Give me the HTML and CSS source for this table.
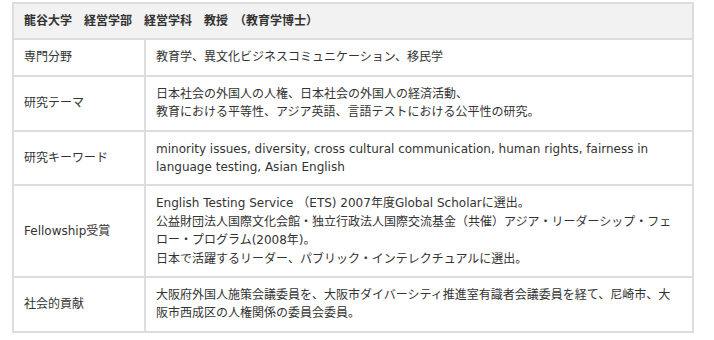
FILE: index.html
```html
<!DOCTYPE html>
<html lang="ja">
<head>
  <meta charset="UTF-8" />
  <title>教員プロフィール</title>
  <link rel="stylesheet" href="styles.css">
</head>
<body>
  <table class="profile">
    <tr>
      <th colspan="2" class="profile-head">龍谷大学　経営学部　経営学科　教授　（教育学博士）</th>
    </tr>
    <tr>
      <td class="label">専門分野</td>
      <td>教育学、異文化ビジネスコミュニケーション、移民学</td>
    </tr>
    <tr>
      <td class="label">研究テーマ</td>
      <td>日本社会の外国人の人権、日本社会の外国人の経済活動、<br>教育における平等性、アジア英語、言語テストにおける公平性の研究。</td>
    </tr>
    <tr>
      <td class="label">研究キーワード</td>
      <td>minority issues, diversity, cross cultural communication, human rights, fairness in language testing, Asian English</td>
    </tr>
    <tr>
      <td class="label">Fellowship受賞</td>
      <td>English Testing Service （ETS) 2007年度Global Scholarに選出。<br>公益財団法人国際文化会館・独立行政法人国際交流基金（共催）アジア・リーダーシップ・フェロー・プログラム(2008年)。<br>日本で活躍するリーダー、パブリック・インテレクチュアルに選出。</td>
    </tr>
    <tr>
      <td class="label">社会的貢献</td>
      <td>大阪府外国人施策会議委員を、大阪市ダイバーシティ推進室有識者会議委員を経て、尼崎市、大阪市西成区の人権関係の委員会委員。</td>
    </tr>
  </table>
</body>
</html>
```

FILE: styles.css
```css
body {
  margin: 2px 0 0 12px;
  font-family: "DejaVu Sans", "Noto Sans CJK JP", sans-serif;
  font-size: 12px;
  color: #333;
  background: #fff;
}

.profile {
  width: 682px;
  border-collapse: collapse;
  border: 2px solid #ddd;
}

.profile th,
.profile td {
  border: 2px solid #ddd;
  padding: 8px 14px 8px 10px;
  line-height: 18.4px;
  text-align: left;
  vertical-align: middle;
}

.profile-head {
  background-color: #f2f2f2;
  font-weight: bold;
}

.profile .label {
  width: 106px;
}
```
